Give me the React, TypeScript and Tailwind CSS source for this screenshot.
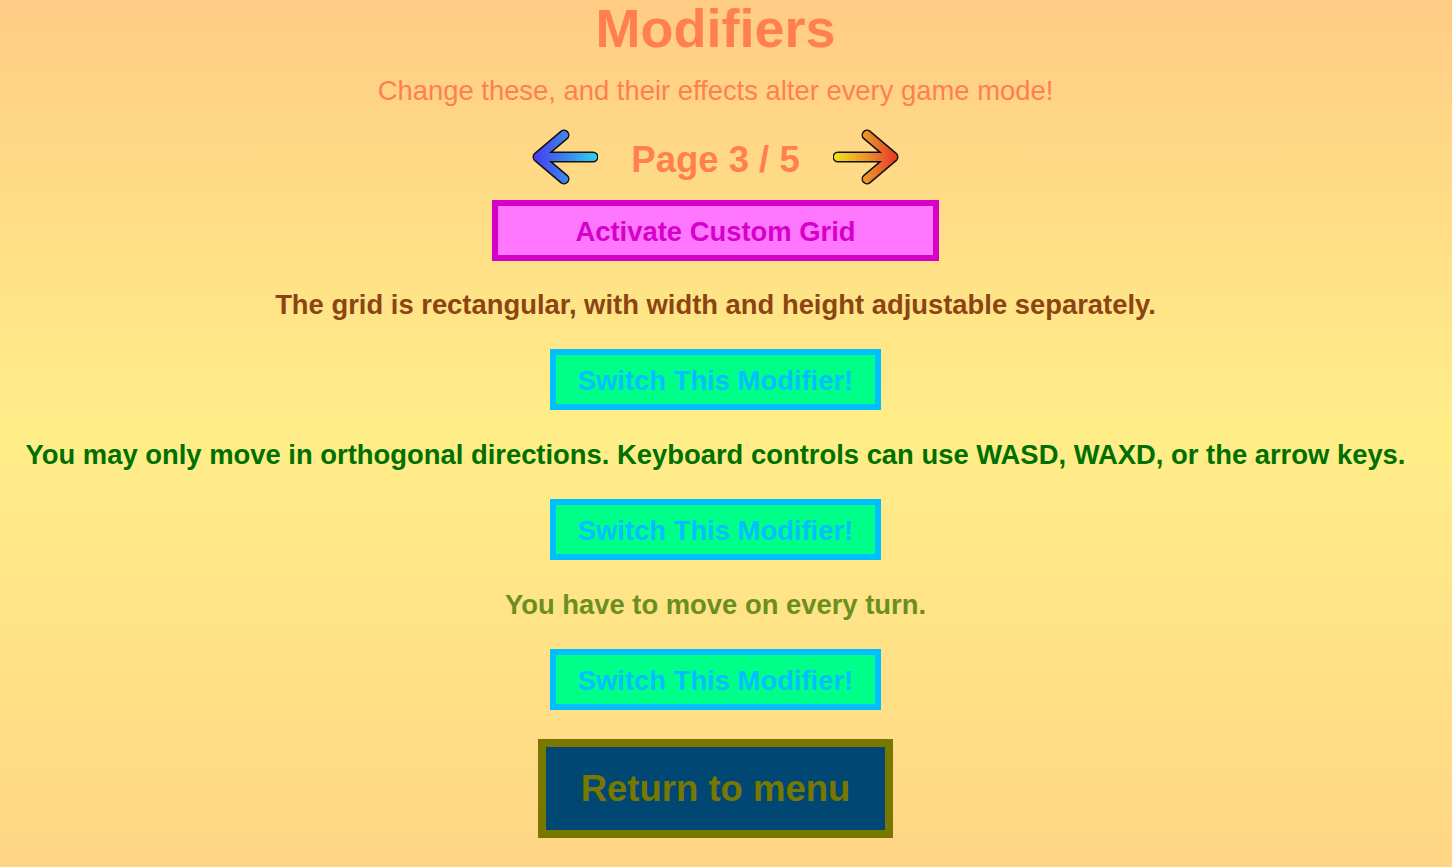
import React from 'react';

function Arrow({ dir }: { dir: 'left' | 'right' }) {
  const id = `grad-${dir}`;
  const d =
    dir === 'left'
      ? 'M61 28 H6 M32 6 L6 28 L32 50'
      : 'M5 28 H60 M34 6 L60 28 L34 50';
  return (
    <svg width="66" height="56" viewBox="0 0 66 56" className="shrink-0 cursor-pointer">
      <defs>
        <linearGradient id={id} x1="0" y1="0" x2="66" y2="0" gradientUnits="userSpaceOnUse">
          {dir === 'left' ? (
            <>
              <stop offset="0" stopColor="#4a34f0" />
              <stop offset="1" stopColor="#2ed2ec" />
            </>
          ) : (
            <>
              <stop offset="0" stopColor="#f2e61e" />
              <stop offset="0.55" stopColor="#ea8a28" />
              <stop offset="1" stopColor="#e8302a" />
            </>
          )}
        </linearGradient>
      </defs>
      <path d={d} fill="none" stroke="#111" strokeWidth="11" strokeLinecap="round" strokeLinejoin="round" />
      <path d={d} fill="none" stroke={`url(#${id})`} strokeWidth="8" strokeLinecap="round" strokeLinejoin="round" />
    </svg>
  );
}

function SwitchButton() {
  return (
    <button className="mt-[29px] w-[331px] border-[6px] border-[#00bfff] bg-[#00ff88] pt-[10px] pb-[8px] text-center text-[27.4px] font-bold leading-[31px] text-[#00bfff]">
      Switch This Modifier!
    </button>
  );
}

export default function App() {
  const modifiers = [
    {
      text: 'The grid is rectangular, with width and height adjustable separately.',
      color: 'text-[#8b4513]',
    },
    {
      text: 'You may only move in orthogonal directions. Keyboard controls can use WASD, WAXD, or the arrow keys.',
      color: 'text-[#007000]',
    },
    {
      text: 'You have to move on every turn.',
      color: 'text-[#6b8e23]',
    },
  ];

  return (
    <main className="flex min-h-screen flex-col items-center bg-[linear-gradient(to_bottom,#ffcc85_0%,#ffee88_50%,#ffd585_100%)] pr-[21px] font-['Liberation_Sans',Arial,sans-serif]">
      <h1 className="text-[54px] font-bold leading-[56px] text-[#ff7f50]">Modifiers</h1>
      <p className="mt-[20px] whitespace-nowrap text-[27.4px] leading-[30px] text-[#ff7f50]">
        Change these, and their effects alter every game mode!
      </p>

      <div className="mt-[23px] flex items-center gap-[33px]">
        <Arrow dir="left" />
        <span className="pt-[6px] text-[36.5px] font-bold leading-[40px] text-[#ff7f50]">Page 3 / 5</span>
        <Arrow dir="right" />
      </div>

      <button className="mt-[15px] w-[447px] border-[6px] border-[#d600c8] bg-[#ff77ff] pt-[10px] pb-[8px] text-center text-[27.4px] font-bold leading-[31px] text-[#d600c8]">
        Activate Custom Grid
      </button>

      {modifiers.map((m, i) => (
        <React.Fragment key={m.text}>
          <p
            className={`${i === 0 ? 'mt-[28px]' : 'mt-[29px]'} whitespace-nowrap text-center text-[27.4px] font-bold leading-[31px] ${m.color}`}
          >
            {m.text}
          </p>
          <SwitchButton />
        </React.Fragment>
      ))}

      <button className="mt-[29px] mb-[31px] w-[355px] border-[8px] border-[#787800] bg-[#004873] pt-[21px] pb-[20px] text-center text-[36.5px] font-bold leading-[42px] text-[#787800]">
        Return to menu
      </button>
    </main>
  );
}
